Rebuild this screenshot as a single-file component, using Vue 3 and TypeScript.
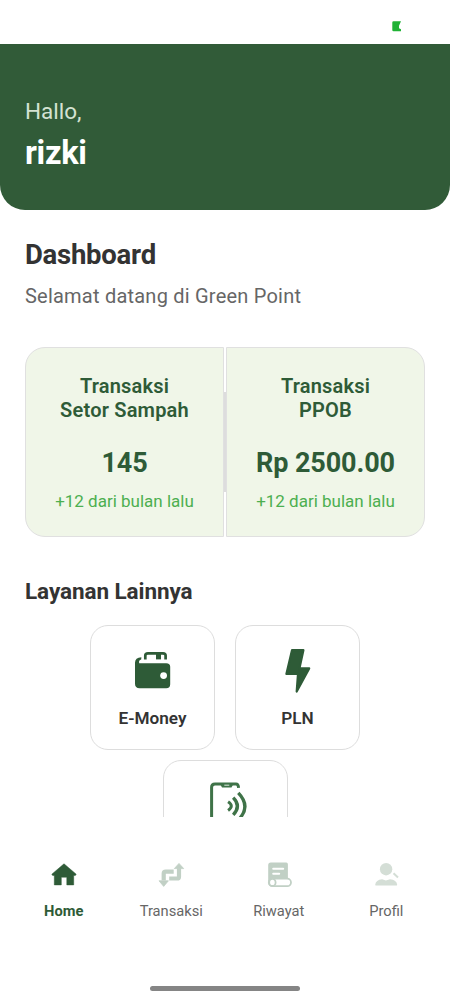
<script setup lang="ts">
interface Stat { lines: string[]; value: string; note: string }
const stats: Stat[] = [
  { lines: ['Transaksi', 'Setor Sampah'], value: '145', note: '+12 dari bulan lalu' },
  { lines: ['Transaksi', 'PPOB'], value: 'Rp 2500.00', note: '+12 dari bulan lalu' },
]
const tabs: { id: string; label: string }[] = [
  { id: 'home', label: 'Home' },
  { id: 'swap', label: 'Transaksi' },
  { id: 'history', label: 'Riwayat' },
  { id: 'profile', label: 'Profil' },
]
</script>

<template>
  <div class="screen">
    <div class="status">
      <svg class="battery" width="10" height="11" viewBox="0 0 10 11">
        <path d="M1.5 0.3H9L7 4.8V7.3L9 8.2V10.3H1.5Q0.3 10.3 0.3 9V1.5Q0.3 0.3 1.5 0.3Z" fill="#20b235" />
      </svg>
    </div>
    <header class="hero">
      <div class="hello">Hallo,</div>
      <div class="name">rizki</div>
    </header>
    <main class="content">
      <h1 class="title">Dashboard</h1>
      <p class="subtitle">Selamat datang di Green Point</p>
      <section class="stats">
        <template v-for="(s, i) in stats" :key="i">
          <div v-if="i > 0" class="divider"></div>
          <article class="stat">
            <div class="stat-title"><div v-for="l in s.lines" :key="l">{{ l }}</div></div>
            <div class="stat-value">{{ s.value }}</div>
            <div class="stat-note">{{ s.note }}</div>
          </article>
        </template>
      </section>
      <h2 class="section-title">Layanan Lainnya</h2>
      <section class="services">
        <div class="service">
          <svg width="50" height="50" viewBox="0 0 50 50">
            <path d="M17.3 14.4V10.6Q17.3 8.3 20 8.3H35Q37.6 8.3 37.6 10.6V14.4" fill="none" stroke="#2e5b37" stroke-width="2.7" />
            <path d="M28 8H33V14.4H28Z" fill="#2e5b37" />
            <path d="M7 17.8Q7 12.4 13.4 12.2L13.2 14.4Q10.4 14.9 11.2 18.2H38.2Q42.2 18.2 42.2 21.8V39.2Q42.2 43.2 38.2 43.2H11.6Q7 43.2 7 38.8Z" fill="#2e5b37" />
            <circle cx="35.6" cy="30.6" r="3.4" fill="#fff" />
          </svg>
          <span>E-Money</span>
        </div>
        <div class="service">
          <svg width="50" height="50" viewBox="0 0 50 50">
            <path d="M19 5.2H30.4L26.4 23.4H36.2L23.7 46.6L25 28.9H13.4Z" fill="#2e5b37" stroke="#2e5b37" stroke-width="2.2" stroke-linejoin="round" />
          </svg>
          <span>PLN</span>
        </div>
        <div class="service">
          <svg width="50" height="50" viewBox="0 0 50 50" fill="none" stroke="#3f7348" stroke-width="3">
            <path d="M11.6 47V7.2Q11.6 4 15 4H36Q38.3 4 38.6 7.8" />
            <path d="M20.5 4.8L22 7.5H31.5L33 4.8Z" fill="#3f7348" stroke="none" />
            <path d="M24.3 5.2H29.3" stroke="#d2ded4" stroke-width="1.1" />
            <path d="M28.1 21.8Q34.5 26 28.1 30.4" />
            <path d="M33.2 17.6Q41.6 26 33.2 34.8" stroke-width="3.3" />
            <path d="M38.3 12.8Q51.5 26.5 38.3 40" stroke-width="3.3" />
          </svg>
        </div>
      </section>
    </main>
    <nav class="tabs">
      <div v-for="t in tabs" :key="t.id" class="tab" :class="{ active: t.id === 'home' }">
        <svg v-if="t.id === 'home'" width="30" height="30" viewBox="0 0 30 30">
          <path d="M15 3.8L27.2 14.2L26.4 15.4H24.7V24.9H17.8V17.2H12.3V24.9H5.3V15.4H3.6L2.8 14.2Z" fill="#2e5b37" stroke="#2e5b37" stroke-width=".5" stroke-linejoin="round" />
        </svg>
        <svg v-else-if="t.id === 'swap'" width="30" height="30" viewBox="0 0 30 30">
          <path d="M7.7 20.5V13.4Q7.7 11.6 9.8 11.6H17.7M23 8V16.7Q23 18.5 21 18.5H13.2" fill="none" stroke="#c1d0c5" stroke-width="4.2" />
          <path d="M18.3 8.6L23 3.4L27.7 8.6ZM3 20.8L7.7 26.4L12.4 20.8Z" fill="#c1d0c5" stroke="#c1d0c5" stroke-width=".8" stroke-linejoin="round" />
        </svg>
        <svg v-else-if="t.id === 'history'" width="30" height="30" viewBox="0 0 30 30">
          <path d="M4.2 23V5.2Q4.2 2.6 6.8 2.6H22.3Q23.9 2.6 23.9 4.2V20H9Z" fill="#c1d0c5" />
          <path d="M9.2 8.8H19.2M9.2 13.7H15.2" stroke="#fff" stroke-width="2" stroke-linecap="round" />
          <rect x="4.8" y="18.7" width="22.2" height="7.4" rx="3.7" fill="#fff" stroke="#c1d0c5" stroke-width="1.8" />
          <ellipse cx="8.4" cy="22.4" rx="3.2" ry="3.6" fill="#fff" stroke="#c1d0c5" stroke-width="1.8" />
        </svg>
        <svg v-else width="30" height="30" viewBox="0 0 30 30">
          <circle cx="15.1" cy="9.2" r="6.2" fill="#d4ded6" />
          <path d="M4.2 24.7Q4.8 19.8 11.1 19.2L14.9 20.6L19 19.2Q25.6 19.8 26.2 24.7Q26.2 25.6 24.8 25.6H5.5Q4.2 25.6 4.2 24.7Z" fill="#d4ded6" />
          <path d="M22.5 13.2L27 17.5" stroke="#d4ded6" stroke-width="2" />
        </svg>
        <span>{{ t.label }}</span>
      </div>
    </nav>
    <div class="gesture"></div>
  </div>
</template>

<style>
body { margin: 0; background: #fff; }
</style>

<style scoped>
.screen { width: 450px; height: 1000px; overflow: hidden; display: flex; flex-direction: column; background: #fff; font-family: Roboto, sans-serif; }
.status { height: 44.4px; flex: none; display: flex; justify-content: flex-end; padding: 21px 48px 0 0; box-sizing: border-box; }
.battery { flex: none; }
.hero { height: 165.6px; flex: none; box-sizing: border-box; padding: 53.6px 25px 0; background: #315b38; border-radius: 0 0 25px 25px; color: #fff; }
.hello { font-size: 22.5px; line-height: 26px; color: #d4e2d2; }
.name { font-size: 32.5px; line-height: 38px; margin-top: 10px; font-weight: 700; letter-spacing: -.3px; }
.content { height: 607.5px; flex: none; box-sizing: border-box; padding: 28px 25px 0; overflow: hidden; }
.title, .subtitle, .section-title { margin: 0; }
.title { font-size: 27.5px; line-height: 33px; font-weight: 700; letter-spacing: -.25px; color: #333; }
.subtitle { margin-top: 13px; font-size: 20px; line-height: 24px; letter-spacing: .22px; color: #666; }
.stats { display: flex; align-items: center; margin-top: 38.6px; }
.stat { flex: 1; height: 190px; box-sizing: border-box; border: 1.25px solid #e0e0e0; background: #f0f6e8; text-align: center; padding-top: 26px; color: #2e5b37; }
.stat:first-child { border-radius: 20px 0 0 20px; }
.stat:last-child { border-radius: 0 20px 20px 0; }
.divider { width: 2px; height: 100px; background: #ddd; }
.stat-title { font-size: 20px; line-height: 24px; font-weight: 600; letter-spacing: .2px; }
.stat-value { margin-top: 25px; font-size: 27px; line-height: 33px; font-weight: 700; letter-spacing: -.1px; }
.stat-note { margin-top: 11px; font-size: 17px; line-height: 21px; color: #4caf50; }
.section-title { margin-top: 41px; font-size: 22.5px; line-height: 27px; font-weight: 700; letter-spacing: -.08px; color: #333; }
.services { display: flex; flex-wrap: wrap; justify-content: center; gap: 10px 20px; margin-top: 20.9px; }
.service { width: 125px; height: 125px; box-sizing: border-box; border: 1.25px solid #ddd; border-radius: 18px; display: flex; flex-direction: column; align-items: center; padding-top: 18.5px; font-size: 17.2px; line-height: 21px; font-weight: 600; color: #333; }
.service svg { flex: none; margin-bottom: 13.5px; }
.tabs { display: flex; flex: none; height: 100px; padding: 43px 10px 0; box-sizing: border-box; }
.tab { width: 107.5px; display: flex; flex-direction: column; align-items: center; font-size: 14.7px; line-height: 18px; color: #666; }
.tab svg { flex: none; }
.tab span { margin-top: 11.5px; }
.tab.active { color: #2e5b37; font-weight: 700; }
.gesture { width: 150px; height: 5px; border-radius: 3px; background: #858585; margin: 68.5px auto 0; }
</style>
